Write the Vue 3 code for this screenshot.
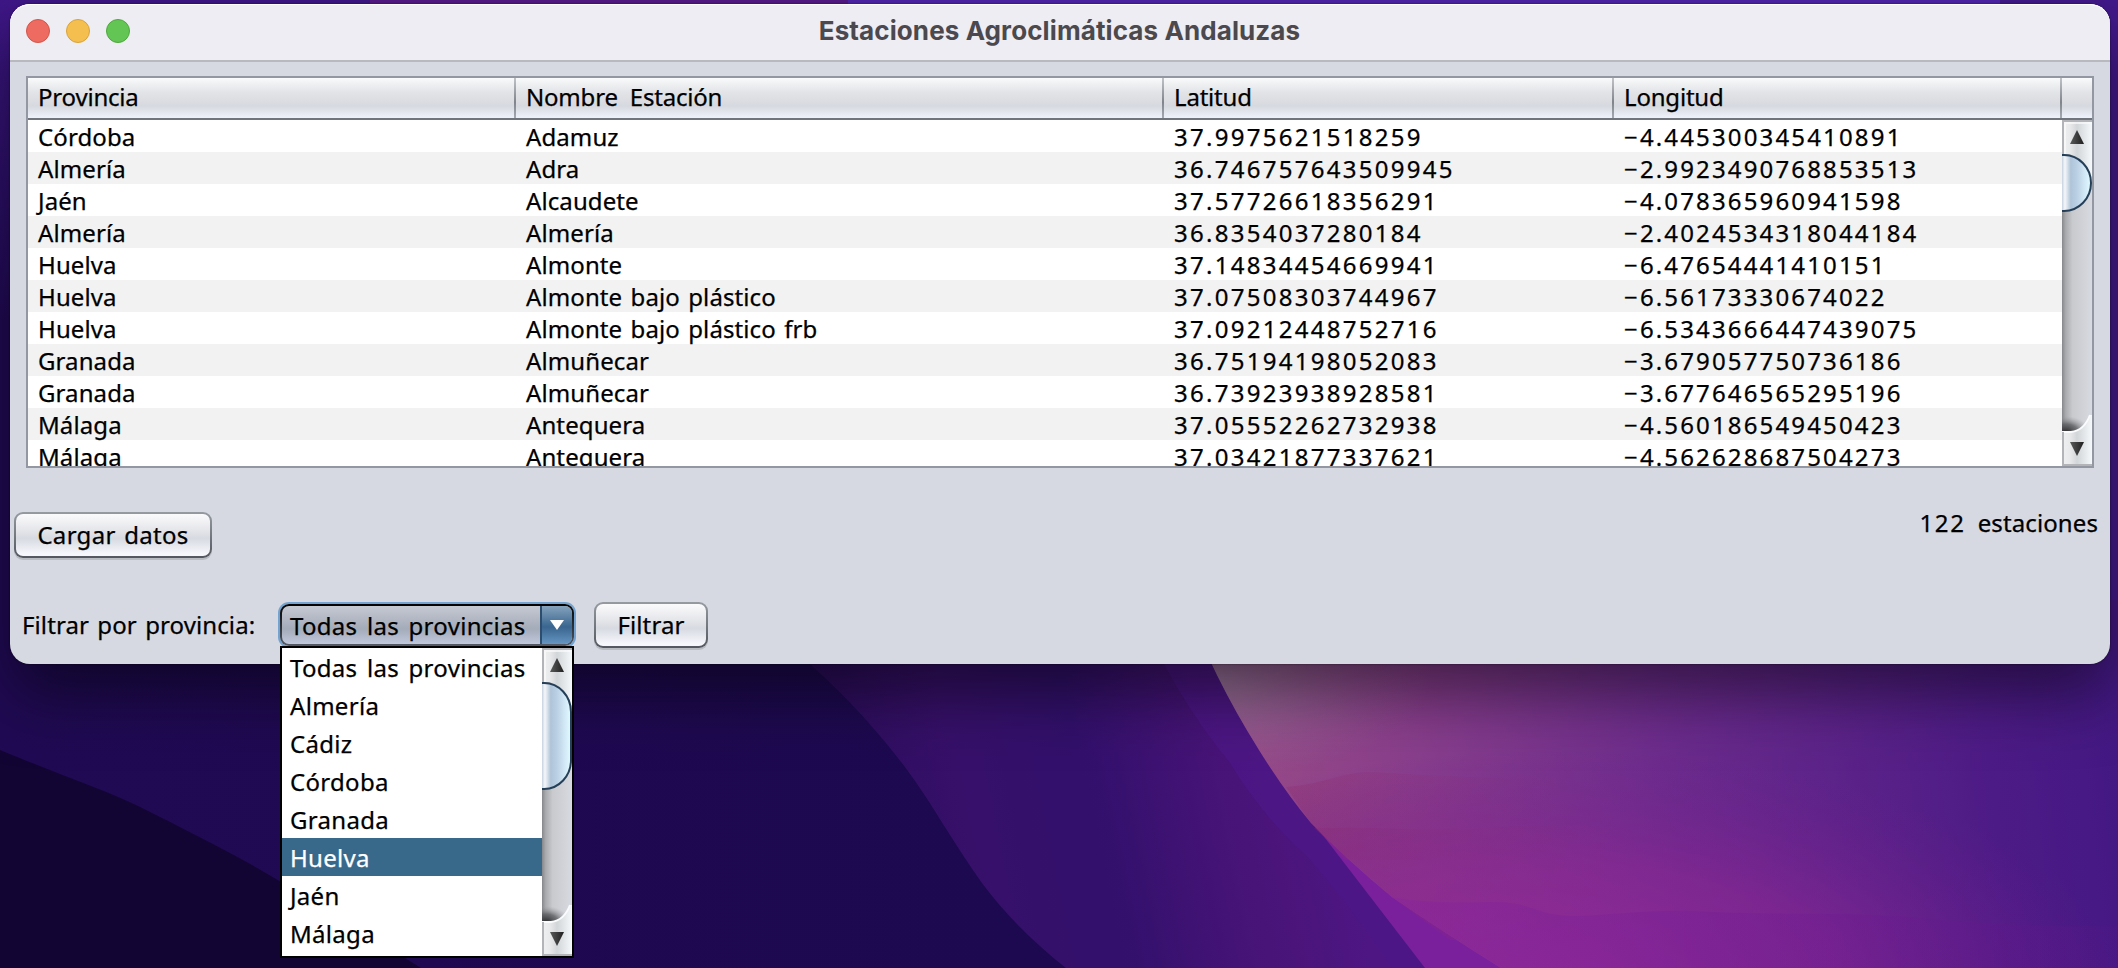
<script setup>
const columns = ['Provincia', 'Nombre Estación', 'Latitud', 'Longitud']

const rows = [
  ['Córdoba', 'Adamuz', '37.9975621518259', '−4.445300345410891'],
  ['Almería', 'Adra', '36.746757643509945', '−2.9923490768853513'],
  ['Jaén', 'Alcaudete', '37.57726618356291', '−4.078365960941598'],
  ['Almería', 'Almería', '36.8354037280184', '−2.4024534318044184'],
  ['Huelva', 'Almonte', '37.14834454669941', '−6.47654441410151'],
  ['Huelva', 'Almonte bajo plástico', '37.07508303744967', '−6.56173330674022'],
  ['Huelva', 'Almonte bajo plástico frb', '37.09212448752716', '−6.5343666447439075'],
  ['Granada', 'Almuñecar', '36.75194198052083', '−3.679057750736186'],
  ['Granada', 'Almuñecar', '36.73923938928581', '−3.677646565295196'],
  ['Málaga', 'Antequera', '37.05552262732938', '−4.560186549450423'],
  ['Málaga', 'Antequera', '37.03421877337621', '−4.562628687504273'],
]

const options = ['Todas las provincias', 'Almería', 'Cádiz', 'Córdoba', 'Granada', 'Huelva', 'Jaén', 'Málaga']
const highlighted = 'Huelva'
</script>

<template>
  <div class="desktop">
    <svg class="wallpaper" viewBox="0 0 2118 968" preserveAspectRatio="none">
      <defs>
        <linearGradient id="wpLeft" x1="0" y1="0" x2="1" y2="0">
          <stop offset="0" stop-color="#200a54" />
          <stop offset="1" stop-color="#1a084a" />
        </linearGradient>
        <linearGradient id="wpEdge" x1="0" y1="0" x2="0" y2="1">
          <stop offset="0" stop-color="#3f1788" />
          <stop offset="1" stop-color="#200a54" />
        </linearGradient>
        <linearGradient id="wpMid" gradientUnits="userSpaceOnUse" x1="850" y1="860" x2="1330" y2="760">
          <stop offset="0" stop-color="#2c0d5c" />
          <stop offset="0.25" stop-color="#37106a" />
          <stop offset="0.5" stop-color="#32106c" />
          <stop offset="0.8" stop-color="#491478" />
          <stop offset="1" stop-color="#4d1683" />
        </linearGradient>
        <linearGradient id="wpRight" gradientUnits="userSpaceOnUse" x1="1230" y1="800" x2="2118" y2="700">
          <stop offset="0" stop-color="#984a85" />
          <stop offset="0.2" stop-color="#8a3f8c" />
          <stop offset="0.5" stop-color="#6b2b8c" />
          <stop offset="0.85" stop-color="#4d1b86" />
          <stop offset="1" stop-color="#431883" />
        </linearGradient>
        <radialGradient id="wpGlow" gradientUnits="userSpaceOnUse" cx="0" cy="0" r="1" gradientTransform="translate(1560 980) scale(560 230)">
          <stop offset="0" stop-color="#96289b" stop-opacity="0.85" />
          <stop offset="0.5" stop-color="#8a2594" stop-opacity="0.6" />
          <stop offset="1" stop-color="#6a1c8c" stop-opacity="0" />
        </radialGradient>
        <radialGradient id="wpPale" gradientUnits="userSpaceOnUse" cx="0" cy="0" r="1" gradientTransform="translate(1210 680) scale(220 100)">
          <stop offset="0" stop-color="#9a86a4" stop-opacity="0.7" />
          <stop offset="1" stop-color="#8c6698" stop-opacity="0" />
        </radialGradient>
        <linearGradient id="wpHill" x1="0" y1="0" x2="1" y2="0">
          <stop offset="0" stop-color="#8f2a6c" stop-opacity="0.28" />
          <stop offset="1" stop-color="#8f2a6c" stop-opacity="0" />
        </linearGradient>
        <linearGradient id="wpHillLow" x1="0" y1="0" x2="1" y2="0">
          <stop offset="0" stop-color="#8a259c" stop-opacity="0.5" />
          <stop offset="0.6" stop-color="#701c92" stop-opacity="0.4" />
          <stop offset="1" stop-color="#541585" stop-opacity="0.3" />
        </linearGradient>
      </defs>
      <rect width="2118" height="968" fill="url(#wpLeft)" />
      <rect width="2118" height="320" fill="url(#wpEdge)" />
      <path d="M370 0H850V60H370Z" fill="#561a88" />
      <path d="M848 0H2118V60H848Z" fill="#4f25ac" />
      <rect x="2000" width="118" height="660" fill="#42198c" />
      <path d="M0 750C60 775 105 790 140 807C190 832 240 857 281 882C335 915 380 942 421 968H0Z" fill="#130533" />
      <path d="M755 600L810 664C850 700 880 734 905 767C932 803 955 846 982 883C1008 918 1038 946 1066 968H1501V600Z" fill="url(#wpMid)" />
      <path d="M1135 600Q1170 690 1230 763Q1265 820 1308 857Q1350 905 1392 968H1501V600Z" fill="#4d1788" opacity="0.65" />
      <path d="M1305 812L1425 968H1520L1392 880Z" fill="#7b209d" />
      <path d="M1185 600Q1212 675 1259 750Q1285 792 1311 823Q1345 858 1392 897Q1448 935 1501 968H2118V600Z" fill="url(#wpRight)" />
      <path d="M1185 600Q1212 675 1259 750Q1285 792 1311 823Q1345 858 1392 897Q1448 935 1501 968H2118V600Z" fill="url(#wpPale)" />
      <path d="M1286 787C1325 784 1340 772 1370 772C1430 775 1480 780 1560 776V860H1345L1311 823Z" fill="url(#wpHill)" />
      <path d="M1314 828C1390 826 1430 833 1490 828C1540 824 1580 822 1640 832V940H1450L1392 897Z" fill="url(#wpHill)" />
      <path d="M1185 600Q1212 675 1259 750Q1285 792 1311 823Q1345 858 1392 897Q1448 935 1501 968H2118V600Z" fill="url(#wpGlow)" />
      <path d="M1392 897C1430 904 1460 902 1500 902C1530 903 1540 916 1574 916C1620 915 1640 910 1690 911C1780 916 1850 911 1920 918Q2020 928 2118 926V968H1501Q1448 935 1392 897Z" fill="url(#wpHillLow)" />
    </svg>

    <svg class="defs" width="0" height="0">
      <defs>
        <linearGradient id="track" x1="0" y1="0" x2="1" y2="0">
          <stop offset="0" stop-color="#86878b" />
          <stop offset="0.12" stop-color="#a9aaae" />
          <stop offset="0.35" stop-color="#c9cace" />
          <stop offset="0.65" stop-color="#d0d1d6" />
          <stop offset="1" stop-color="#d7dae2" />
        </linearGradient>
        <linearGradient id="cap" x1="0" y1="0" x2="1" y2="0">
          <stop offset="0" stop-color="#eff0f1" />
          <stop offset="0.25" stop-color="#e9eaeb" />
          <stop offset="0.5" stop-color="#d3d6d9" />
          <stop offset="0.75" stop-color="#e3e7ea" />
          <stop offset="1" stop-color="#f6f9fb" />
        </linearGradient>
        <linearGradient id="thumb" x1="0" y1="0" x2="1" y2="0">
          <stop offset="0" stop-color="#c6d2df" />
          <stop offset="0.1" stop-color="#f5f8fb" />
          <stop offset="0.3" stop-color="#b0c4d8" />
          <stop offset="0.5" stop-color="#b9cfe3" />
          <stop offset="0.8" stop-color="#d3eaf7" />
          <stop offset="1" stop-color="#e2fbff" />
        </linearGradient>
        <linearGradient id="arrow" x1="0" y1="0" x2="1" y2="0">
          <stop offset="0" stop-color="#5a5a5a" />
          <stop offset="1" stop-color="#1f1f1f" />
        </linearGradient>
        <radialGradient id="pit" gradientUnits="userSpaceOnUse" cx="0" cy="0" r="1" gradientTransform="translate(4 24) scale(24 16)">
          <stop offset="0" stop-color="#2c2c2e" />
          <stop offset="0.5" stop-color="#55565a" stop-opacity="0.75" />
          <stop offset="1" stop-color="#9a9ba0" stop-opacity="0" />
        </radialGradient>
        <symbol id="capUp" viewBox="0 0 30 64">
          <path d="M0 0H30V60C28 48 20 36 6 34H0Z" fill="url(#cap)" />
          <path d="M0 0H30V2H2V34H0Z" fill="#b2b4b7" />
          <path d="M2 2H30V4H4V34H2Z" fill="#fbfbfc" opacity="0.7" />
          <path d="M8 24L15 10L22 24Z" fill="url(#arrow)" />
        </symbol>
        <symbol id="capDown" viewBox="0 0 30 58">
          <rect y="4" width="30" height="22" fill="url(#pit)" />
          <path d="M0 24H9C19 23 25 15 28 7H30V58H0Z" fill="url(#cap)" />
          <path d="M0 24H9C19 23 25 15 28 7" fill="none" stroke="#fafbfc" stroke-width="2" />
          <path d="M0 24H2V56H30V58H0Z" fill="#b2b4b7" />
          <path d="M8 34H22L15 48Z" fill="url(#arrow)" />
        </symbol>
      </defs>
    </svg>

    <main class="window">
      <header class="titlebar">
        <span class="light close"></span>
        <span class="light minimize"></span>
        <span class="light zoom"></span>
        <h1>Estaciones Agroclimáticas Andaluzas</h1>
      </header>

      <section class="table">
        <div class="thead">
          <div v-for="c in columns" :key="c" class="th">{{ c }}</div>
          <div class="th corner"></div>
        </div>
        <div class="tbody">
          <div class="rows">
            <div v-for="(r, i) in rows" :key="i" class="row">
              <div v-for="(v, j) in r" :key="j" class="td" :class="{ num: j > 1, lon: j === 3 }">{{ v }}</div>
            </div>
          </div>
          <svg class="scrollbar" width="30" height="346" viewBox="0 0 30 346">
            <rect width="30" height="346" fill="url(#track)" />
            <use href="#capUp" width="30" height="64" />
            <path d="M0 35H2A27 28 0 0 1 29 63A27 28 0 0 1 2 91H0Z" fill="url(#thumb)" />
            <path d="M0 35H2A27 28 0 0 1 29 63A27 28 0 0 1 2 91H0" fill="none" stroke="#243f57" stroke-width="2" />
            <use href="#capDown" y="288" width="30" height="58" />
          </svg>
        </div>
      </section>

      <div class="actions">
        <button class="btn load">Cargar datos</button>
        <div class="count"><span class="total">122</span><span>estaciones</span></div>
      </div>

      <div class="filter">
        <label>Filtrar por provincia:</label>
        <div class="combo">
          <div class="combo-face">
            <span class="combo-value">Todas las provincias</span>
            <span class="combo-arrow">
              <svg width="14" height="10" viewBox="0 0 14 10"><path d="M0 0H14L7 10Z" fill="#fff" /></svg>
            </span>
          </div>
          <div class="popup">
            <ul>
              <li v-for="o in options" :key="o" :class="{ active: o === highlighted }">{{ o }}</li>
            </ul>
            <svg class="scrollbar" width="30" height="308" viewBox="0 0 30 308">
              <rect width="30" height="308" fill="url(#track)" />
              <use href="#capUp" width="30" height="64" />
              <path d="M0 35H2A27 29 0 0 1 29 64V112A27 29 0 0 1 2 141H0Z" fill="url(#thumb)" />
              <path d="M0 35H2A27 29 0 0 1 29 64V112A27 29 0 0 1 2 141H0" fill="none" stroke="#243f57" stroke-width="2" />
              <use href="#capDown" y="250" width="30" height="58" />
            </svg>
          </div>
        </div>
        <button class="btn apply">Filtrar</button>
      </div>
    </main>
  </div>
</template>

<style>
body {
  margin: 0;
  overflow: hidden;
}
</style>

<style scoped>
* {
  box-sizing: border-box;
}
.desktop {
  position: relative;
  width: 2118px;
  height: 968px;
  padding: 4px 8px 0 10px;
  overflow: hidden;
  font-family: "Noto Sans", "Open Sans", sans-serif;
  font-size: 24px;
  color: #000;
  -webkit-text-stroke: 0.25px;
}
.wallpaper {
  position: absolute;
  inset: 0;
  width: 2118px;
  height: 968px;
}
.defs {
  position: absolute;
}
.window {
  position: relative;
  width: 2100px;
  height: 660px;
  border-radius: 20px;
  background: #d6d9e1;
  box-shadow: 0 0 2px rgba(0, 0, 0, 0.6), 0 30px 64px rgba(0, 0, 0, 0.5);
}
.titlebar {
  display: flex;
  align-items: center;
  gap: 16px;
  height: 58px;
  padding: 0 16px 2px;
  border-radius: 20px 20px 0 0;
  border-bottom: 2px solid #b8b9be;
  background: #eeedf3;
  box-shadow: inset 0 1px #fff;
}
.light {
  width: 24px;
  height: 24px;
  border-radius: 50%;
}
.close {
  background: #ed6b60;
  border: 1px solid #d35549;
}
.minimize {
  background: #f5bf4f;
  border: 1px solid #d8a33c;
}
.zoom {
  background: #62c554;
  border: 1px solid #50a73e;
}
h1 {
  flex: 1;
  margin: 0 121px 0 -16px;
  padding-left: 16px;
  text-align: center;
  font: 700 26px/30px Inter, sans-serif;
  letter-spacing: 0.1px;
  color: #4b494d;
  -webkit-text-stroke: 0;
}
.table {
  width: 2068px;
  height: 392px;
  margin: 14px 0 0 16px;
  border: 2px solid #9297a1;
  background: #fff;
  overflow: hidden;
}
.thead,
.row {
  display: grid;
  grid-template-columns: 488px 648px 450px 448px 30px;
}
.thead {
  height: 42px;
  border-bottom: 2px solid #70757d;
  background: linear-gradient(#f9fafb, #e3e4e7 35%, #d6d9df 70%, #eef2fb);
}
.th {
  padding-left: 10px;
  line-height: 38px;
  letter-spacing: -0.2px;
  word-spacing: 6px;
  border-right: 2px solid;
  border-image: linear-gradient(#c3c5c9, #80848b 60%, #a7abb3) 1;
}
.corner {
  border: 0;
}
.tbody {
  display: flex;
  height: 346px;
}
.rows {
  width: 2034px;
  overflow: hidden;
}
.row {
  height: 32px;
  background: #fff;
}
.row:nth-child(even) {
  background: #f2f2f2;
}
.td {
  padding-left: 10px;
  line-height: 34px;
  letter-spacing: 0.1px;
  word-spacing: 2px;
  white-space: pre;
}
.td.num {
  letter-spacing: 2.27px;
}
.td.lon {
  letter-spacing: 2.15px;
}
.scrollbar {
  display: block;
  flex: none;
}
.actions {
  display: flex;
  justify-content: space-between;
  height: 46px;
  margin-top: 44px;
  padding: 0 12px 0 4px;
}
.btn {
  height: 46px;
  padding: 0;
  border: 2px solid transparent;
  border-radius: 9px;
  font: inherit;
  line-height: 42px;
  color: #000;
  background: linear-gradient(#fbfbfc, #e4e5e9 40%, #d7dae1 58%, #f6f7fd 95%) padding-box,
    linear-gradient(#969ba2, #53565e) border-box;
  box-shadow: 0 2px 0 #b9bbc2;
}
.load {
  width: 198px;
  letter-spacing: 0.3px;
  word-spacing: 2px;
}
.count {
  display: flex;
  gap: 12px;
  margin-top: -5px;
  line-height: 32px;
  letter-spacing: 0.1px;
}
.total {
  letter-spacing: 1.7px;
}
.filter {
  display: flex;
  height: 46px;
  margin-top: 44px;
  padding-left: 12px;
}
.filter label {
  width: 258px;
  line-height: 46px;
  letter-spacing: 0.1px;
  word-spacing: 2px;
  white-space: pre;
}
.combo {
  position: relative;
  width: 294px;
  height: 44px;
  margin-top: 2px;
}
.combo-face {
  display: flex;
  height: 42px;
  border: 2px solid transparent;
  border-radius: 9px;
  background: linear-gradient(#c5c9d2, #a4abb9 60%, #bfc8dc) padding-box,
    linear-gradient(#000, #555b66) border-box;
  box-shadow: 0 0 0 2px #73a4d1;
}
.combo-value {
  width: 258px;
  padding-left: 8px;
  line-height: 40px;
  letter-spacing: 0.3px;
  word-spacing: 3px;
  white-space: pre;
}
.combo-arrow {
  display: flex;
  flex: 1;
  align-items: center;
  justify-content: center;
  border-left: 2px solid #2c4d6e;
  border-radius: 0 7px 7px 0;
  background: linear-gradient(#85a3bd, #39658f 55%, #6595c2);
}
.popup {
  position: absolute;
  top: 42px;
  left: 0;
  display: flex;
  width: 294px;
  height: 312px;
  border: 2px solid #000;
  background: #fff;
}
ul {
  flex: 1;
  margin: 0;
  padding: 0;
  list-style: none;
}
li {
  height: 38px;
  padding-left: 8px;
  line-height: 39px;
  letter-spacing: 0.3px;
  word-spacing: 3px;
  white-space: pre;
}
.active {
  background: #39698a;
  color: #fff;
}
.apply {
  width: 114px;
  margin-left: 20px;
  letter-spacing: 0.1px;
}
</style>
